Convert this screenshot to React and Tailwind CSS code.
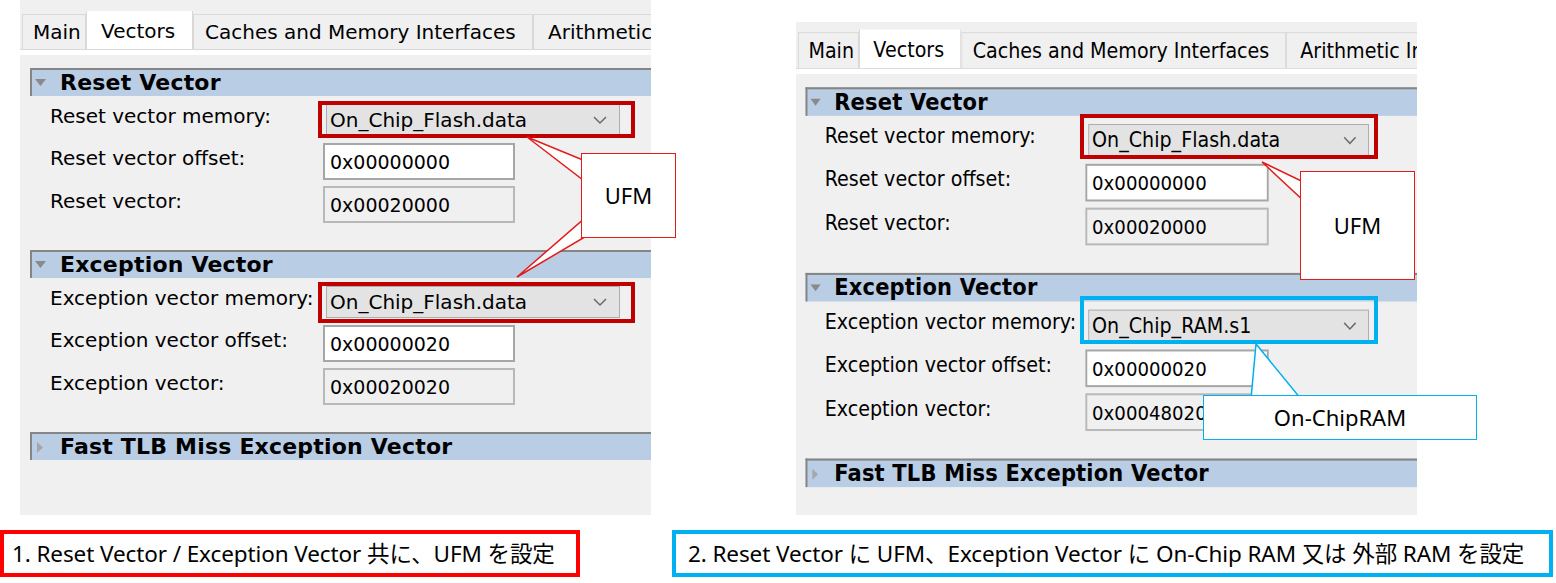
import React from "react";

const LEFT = {
  reset: "On_Chip_Flash.data",
  rOff: "0x00000000",
  rVec: "0x00020000",
  exc: "On_Chip_Flash.data",
  eOff: "0x00000020",
  eVec: "0x00020020",
};
const RIGHT = {
  reset: "On_Chip_Flash.data",
  rOff: "0x00000000",
  rVec: "0x00020000",
  exc: "On_Chip_RAM.s1",
  eOff: "0x00000020",
  eVec: "0x00048020",
};

function Chevron() {
  return (
    <svg width="16" height="10" viewBox="0 0 16 10">
      <path d="M2 2 L8 8 L14 2" fill="none" stroke="#6a6a6a" strokeWidth="1.5" />
    </svg>
  );
}

function Header({ title, open }) {
  return (
    <div className="ml-[10px] h-[28px] flex items-center bg-[#b9cde5] border-t-2 border-l-2 border-[#858585]">
      <div className="w-[28px] flex items-center">
        {open ? (
          <svg width="12" height="8" viewBox="0 0 12 8" className="ml-[3px]">
            <polygon points="0,0 11,0 5.5,7" fill="#8a8a8a" />
          </svg>
        ) : (
          <svg width="7" height="11" viewBox="0 0 7 11" className="ml-[5px]">
            <polygon points="0,0 0,11 6,5.5" fill="#a6a6a6" />
          </svg>
        )}
      </div>
      <span className="font-bold text-[22px] leading-[26px] tracking-[0.2px] text-black whitespace-nowrap">
        {title}
      </span>
    </div>
  );
}

function Row({ label, children, className }) {
  return (
    <div className={"flex items-center ml-[30px] " + (className || "")}>
      <div className="w-[273px] text-[20px] leading-[24px] mb-[8px] whitespace-nowrap text-black">
        {label}
      </div>
      {children}
    </div>
  );
}

function Combo({ value }) {
  return (
    <div className="ml-[3px] w-[294px] h-[32px] bg-[#e3e3e3] border border-[#adadad] flex items-center justify-between pl-[3px] pr-[11px] text-[20px] leading-[24px] text-black whitespace-nowrap">
      <span>{value}</span>
      <Chevron />
    </div>
  );
}

function Field({ value, disabled }) {
  return (
    <div
      className={
        "w-[192px] h-[37px] border-2 flex items-center pl-[5px] text-[19px] leading-[24px] text-black whitespace-nowrap " +
        (disabled ? "bg-[#f0f0f0] border-[#b8b8b8]" : "bg-white border-[#a6a6a6]")
      }
    >
      {value}
    </div>
  );
}

function Tab({ children, active, className }) {
  return (
    <div
      className={
        "flex items-center whitespace-nowrap text-[20px] leading-[24px] text-black border border-b-0 border-[#d9d9d9] shrink-0 " +
        (active ? "h-[40px] bg-white -mb-px relative z-10" : "h-[35px] bg-[#f0f0f0]") +
        " " +
        className
      }
    >
      {children}
    </div>
  );
}

function Panel({ d, topCls, sizeCls }) {
  return (
    <div className={"bg-[#f0f0f0] overflow-hidden font-['DejaVu_Sans',sans-serif] " + sizeCls}>
      <div className={topCls} />
      <div className="flex items-end h-[39px] pl-[2px] border-b border-[#d9d9d9] overflow-hidden">
        <Tab className="w-[64px] pl-[10px]">Main</Tab>
        <Tab active className="w-[107px] pl-[14px]">Vectors</Tab>
        <Tab className="w-[340px] pl-[11px]">Caches and Memory Interfaces</Tab>
        <Tab className="w-[240px] pl-[14px]">Arithmetic Instructions</Tab>
      </div>
      <div className="h-[5px] bg-white" />
      <div className="mt-[13px]">
        <Header title="Reset Vector" open />
        <Row label="Reset vector memory:" className="mt-[8px]">
          <Combo value={d.reset} />
        </Row>
        <Row label="Reset vector offset:" className="mt-[7px]">
          <Field value={d.rOff} />
        </Row>
        <Row label="Reset vector:" className="mt-[6px]">
          <Field value={d.rVec} disabled />
        </Row>
      </div>
      <div className="mt-[27px]">
        <Header title="Exception Vector" open />
        <Row label="Exception vector memory:" className="mt-[8px]">
          <Combo value={d.exc} />
        </Row>
        <Row label="Exception vector offset:" className="mt-[7px]">
          <Field value={d.eOff} />
        </Row>
        <Row label="Exception vector:" className="mt-[6px]">
          <Field value={d.eVec} disabled />
        </Row>
      </div>
      <div className="mt-[27px]">
        <Header title="Fast TLB Miss Exception Vector" />
      </div>
    </div>
  );
}

const CAP = "font-['Noto_Sans','Noto_Sans_CJK_JP',sans-serif]";

export default function App() {
  return (
    <div className="relative w-[1556px] h-[583px] bg-white overflow-hidden">
      <div className="flex items-start">
        <div className="ml-[20px]">
          <Panel d={LEFT} topCls="h-[11px]" sizeCls="w-[631px] h-[515px]" />
        </div>
        <div className="ml-[145px] mt-[22px] w-[621px] h-[493px] overflow-hidden">
          <div className="origin-top-left scale-x-[0.955] scale-y-[1.02]">
            <Panel d={RIGHT} topCls="h-[7px]" sizeCls="w-[651px] h-[484px]" />
          </div>
        </div>
      </div>

      <div className={"flex mt-[15px] " + CAP}>
        <div className="w-[580px] h-[47px] border-4 border-[#ff0000] flex items-center pl-[8px] text-[22.5px] tracking-[-0.1px] text-black whitespace-nowrap">
          1. Reset Vector / Exception Vector 共に、UFM を設定
        </div>
        <div className="ml-[92px] w-[881px] h-[47px] border-4 border-[#00b0f0] flex items-center pl-[12px] text-[22.5px] tracking-[-0.1px] text-black whitespace-nowrap">
          2. Reset Vector に UFM、Exception Vector に On-Chip RAM 又は 外部 RAM を設定
        </div>
      </div>

      {/* highlight frames */}
      <div className="absolute left-[318px] top-[101px] w-[317px] h-[37px] border-4 border-[#c00000]" />
      <div className="absolute left-[318px] top-[282px] w-[317px] h-[41px] border-4 border-[#c00000]" />
      <div className="absolute left-[1080px] top-[114px] w-[298px] h-[45px] border-4 border-[#c00000]" />
      <div className="absolute left-[1080px] top-[296px] w-[298px] h-[48px] border-4 border-[#00b0f0]" />

      {/* callout pointers */}
      <svg className="absolute left-0 top-0 pointer-events-none" width="1556" height="583" viewBox="0 0 1556 583">
        <polygon points="527,137 600,167 600,193" fill="#ffffff" stroke="#e31b1b" strokeWidth="1.5" />
        <polygon points="517,277 600,205 600,228" fill="#ffffff" stroke="#e31b1b" strokeWidth="1.5" />
        <polygon points="1262,162 1320,190 1320,216" fill="#ffffff" stroke="#e31b1b" strokeWidth="1.5" />
        <polygon points="1256,344 1250,410 1310,410" fill="#ffffff" stroke="#00b0f0" strokeWidth="1.5" />
      </svg>

      {/* callout boxes */}
      <div className={"absolute left-[581px] top-[153px] w-[95px] h-[85px] bg-white border-[1.5px] border-[#e31b1b] flex items-center justify-center text-[22px] text-black " + CAP}>
        UFM
      </div>
      <div className={"absolute left-[1300px] top-[171px] w-[115px] h-[109px] bg-white border-[1.5px] border-[#e31b1b] flex items-center justify-center text-[22px] text-black " + CAP}>
        UFM
      </div>
      <div className={"absolute left-[1203px] top-[395px] w-[274px] h-[45px] bg-white border-[1.5px] border-[#00b0f0] flex items-center justify-center text-[22px] text-black " + CAP}>
        On-ChipRAM
      </div>
    </div>
  );
}
